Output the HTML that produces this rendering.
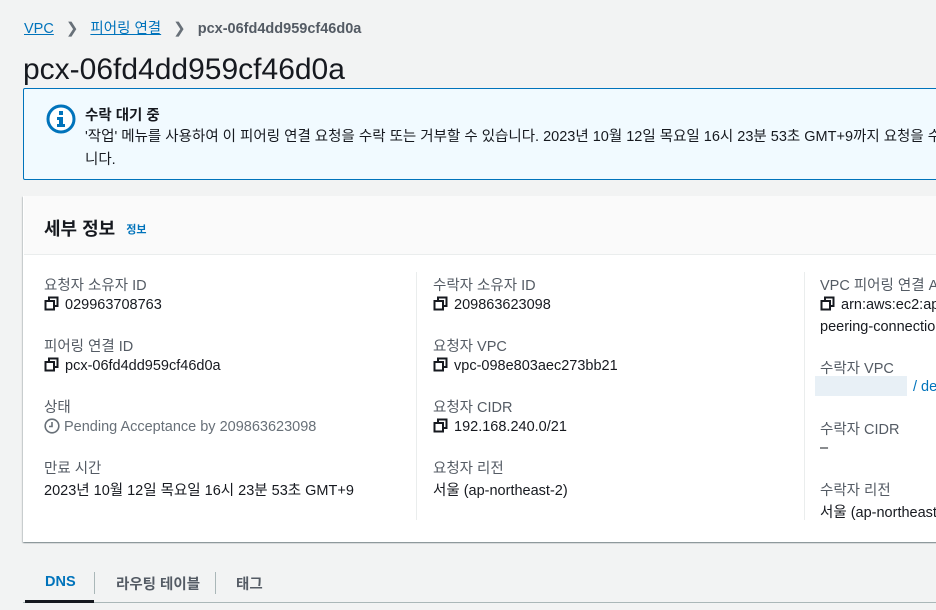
<!DOCTYPE html>
<html><head><meta charset="utf-8"><style>
*{margin:0;padding:0;box-sizing:border-box}
html,body{width:936px;height:610px;overflow:hidden}
body{background:#f2f3f3;font-family:"Liberation Sans","Noto Sans CJK KR",sans-serif;color:#16191f;position:relative}
.a{position:absolute;white-space:nowrap}
.lbl{color:#545b64;font-size:14.5px}
.val{font-size:14.5px;color:#16191f}
.cp{display:inline-block;width:15px;height:15px;vertical-align:-2px;margin-right:6px}
</style></head><body>
<div style="position:absolute;left:0;top:0;width:936px;height:610px;overflow:hidden">
<div class="a" style="left:24px;top:17px;font-size:14.5px;"><span style="color:#0073bb;text-decoration:underline">VPC</span><span style="color:#687078;margin:0 12px;font-size:15px">&#x276F;</span><span style="color:#0073bb;text-decoration:underline">피어링 연결</span><span style="color:#687078;margin:0 12px;font-size:15px">&#x276F;</span><span style="color:#545b64;font-weight:bold">pcx-06fd4dd959cf46d0a</span></div>
<div class="a" style="left:23px;top:53px;font-size:30px;">pcx-06fd4dd959cf46d0a</div>
<div class="a" style="left:23px;top:88px;width:920px;height:92px;background:#f1faff;border:1px solid #0073bb;border-radius:2px"></div>
<svg class="a" style="left:45px;top:103px" width="32" height="32" viewBox="0 0 32 32"><circle cx="16" cy="16" r="13" fill="#fff" stroke="#0073bb" stroke-width="3"/><rect x="14" y="8" width="4" height="4" fill="#0073bb"/><path d="M12 14h6v7h2v3h-8v-3h2v-4h-2z" fill="#0073bb"/></svg>
<div class="a" style="left:85px;top:104px;font-size:14.5px;font-weight:bold">수락 대기 중</div>
<div class="a" style="left:85px;top:125px;font-size:14.5px">'작업' 메뉴를 사용하여 이 피어링 연결 요청을 수락 또는 거부할 수 있습니다. 2023년 10월 12일 목요일 16시 23분 53초 GMT+9까지 요청을 수락 또는 거부</div>
<div class="a" style="left:85px;top:148px;font-size:14.5px">니다.</div>
<div class="a" style="left:23px;top:196px;width:920px;height:346px;background:#fff;box-shadow:0 1px 1px rgba(0,28,36,.3),1px 1px 1px rgba(0,28,36,.15),-1px 1px 1px rgba(0,28,36,.15)"></div>
<div class="a" style="left:24px;top:196px;width:920px;height:59px;background:#fafafa;border-bottom:1px solid #eaeded"></div>
<div class="a" style="left:44px;top:215px;font-size:18px;font-weight:bold">세부 정보 <span style="font-size:11px;color:#0073bb;margin-left:6px;vertical-align:2px">정보</span></div>
<div class="a" style="left:416px;top:272px;width:1px;height:248px;background:#eaeded"></div>
<div class="a" style="left:804px;top:272px;width:1px;height:248px;background:#eaeded"></div>
<div class="a lbl" style="left:44px;top:274px">요청자 소유자 ID</div>
<div class="a val" style="left:44px;top:296px"><svg class="cp" viewBox="0 0 15 15"><path d="M5 4V1.5h8.5V10H11" fill="none" stroke="#16191f" stroke-width="2"/><rect x="1.5" y="5" width="8.5" height="8.5" fill="none" stroke="#16191f" stroke-width="2"/></svg>029963708763</div>
<div class="a lbl" style="left:44px;top:335px">피어링 연결 ID</div>
<div class="a val" style="left:44px;top:357px"><svg class="cp" viewBox="0 0 15 15"><path d="M5 4V1.5h8.5V10H11" fill="none" stroke="#16191f" stroke-width="2"/><rect x="1.5" y="5" width="8.5" height="8.5" fill="none" stroke="#16191f" stroke-width="2"/></svg>pcx-06fd4dd959cf46d0a</div>
<div class="a lbl" style="left:44px;top:396px">상태</div>
<div class="a" style="left:44px;top:418px;font-size:14.5px;color:#687078"><svg width="16" height="16" viewBox="0 0 16 16" style="vertical-align:-3px;margin-right:4px"><circle cx="8" cy="8" r="6.8" fill="none" stroke="#687078" stroke-width="1.6"/><path d="M8 4v4.5H5" fill="none" stroke="#687078" stroke-width="1.6"/></svg>Pending Acceptance by 209863623098</div>
<div class="a lbl" style="left:44px;top:457px">만료 시간</div>
<div class="a val" style="left:44px;top:479px">2023년 10월 12일 목요일 16시 23분 53초 GMT+9</div>
<div class="a lbl" style="left:433px;top:274px">수락자 소유자 ID</div>
<div class="a val" style="left:433px;top:296px"><svg class="cp" viewBox="0 0 15 15"><path d="M5 4V1.5h8.5V10H11" fill="none" stroke="#16191f" stroke-width="2"/><rect x="1.5" y="5" width="8.5" height="8.5" fill="none" stroke="#16191f" stroke-width="2"/></svg>209863623098</div>
<div class="a lbl" style="left:433px;top:335px">요청자 VPC</div>
<div class="a val" style="left:433px;top:357px"><svg class="cp" viewBox="0 0 15 15"><path d="M5 4V1.5h8.5V10H11" fill="none" stroke="#16191f" stroke-width="2"/><rect x="1.5" y="5" width="8.5" height="8.5" fill="none" stroke="#16191f" stroke-width="2"/></svg>vpc-098e803aec273bb21</div>
<div class="a lbl" style="left:433px;top:396px">요청자 CIDR</div>
<div class="a val" style="left:433px;top:418px"><svg class="cp" viewBox="0 0 15 15"><path d="M5 4V1.5h8.5V10H11" fill="none" stroke="#16191f" stroke-width="2"/><rect x="1.5" y="5" width="8.5" height="8.5" fill="none" stroke="#16191f" stroke-width="2"/></svg>192.168.240.0/21</div>
<div class="a lbl" style="left:433px;top:457px">요청자 리전</div>
<div class="a val" style="left:433px;top:479px">서울 (ap-northeast-2)</div>
<div class="a lbl" style="left:820px;top:274px">VPC 피어링 연결 ARN</div>
<div class="a val" style="left:820px;top:296px"><svg class="cp" viewBox="0 0 15 15"><path d="M5 4V1.5h8.5V10H11" fill="none" stroke="#16191f" stroke-width="2"/><rect x="1.5" y="5" width="8.5" height="8.5" fill="none" stroke="#16191f" stroke-width="2"/></svg>arn:aws:ec2:ap-northeast-2</div>
<div class="a val" style="left:820px;top:319px">peering-connection</div>
<div class="a lbl" style="left:820px;top:357px">수락자 VPC</div>
<div class="a" style="left:815px;top:376px;width:92px;height:20px;background:#e8f0f6"></div>
<div class="a" style="left:913px;top:379px;font-size:14.5px;color:#0073bb">/ def</div>
<div class="a lbl" style="left:820px;top:418px">수락자 CIDR</div>
<div class="a val" style="left:820px;top:440px">–</div>
<div class="a lbl" style="left:820px;top:479px">수락자 리전</div>
<div class="a val" style="left:820px;top:501px">서울 (ap-northeast-2)</div>
<div class="a" style="left:23px;top:602px;width:913px;height:1px;background:#aab7b8"></div>
<div class="a" style="left:25px;top:600px;width:69px;height:3px;background:#16191f"></div>
<div class="a" style="left:94px;top:572px;width:1px;height:22px;background:#aab7b8"></div>
<div class="a" style="left:215px;top:572px;width:1px;height:22px;background:#aab7b8"></div>
<div class="a" style="left:45px;top:574px;font-size:14.5px;font-weight:bold;color:#0073bb">DNS</div>
<div class="a" style="left:116px;top:573px;font-size:14.5px;font-weight:bold;color:#545b64">라우팅 테이블</div>
<div class="a" style="left:236px;top:573px;font-size:14.5px;font-weight:bold;color:#545b64">태그</div>
</div>
</body></html>
